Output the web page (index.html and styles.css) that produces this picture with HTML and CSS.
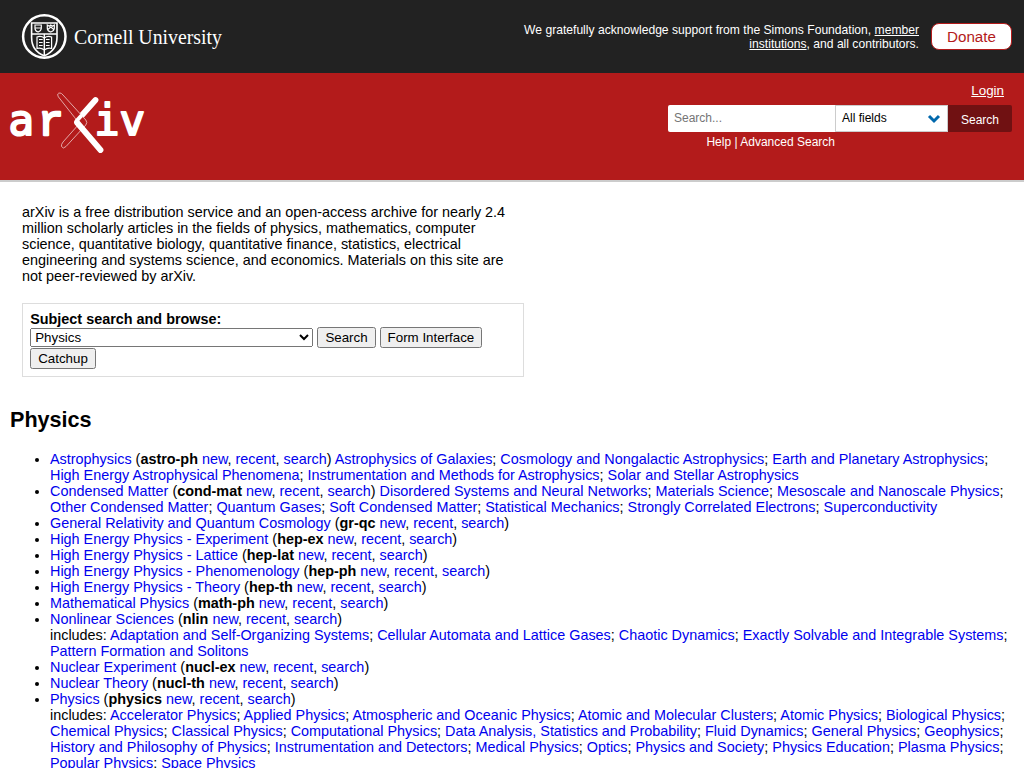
FILE: index.html
```html
<!DOCTYPE html>
<html lang="en">
<head>
<meta charset="utf-8">
<title>arXiv.org e-Print archive</title>
<link rel="stylesheet" href="styles.css">
</head>
<body>
<header>
<div class="topbar">
<svg class="cornell" width="210" height="50" viewBox="0 0 210 50" role="img" aria-label="Cornell University">
<g fill="none" stroke="#fff">
<circle cx="24.300" cy="25.500" r="21.200" stroke-width="2.500"/>
<path d="M11.600 12H37V26.500C37 36 31 42 24.300 44.800C17 42 11.600 36 11.600 26.500Z" stroke-width="1.600"/>
<path d="M11.800 23H36.800M24.300 23V44.500" stroke-width="1.400"/>
<path d="M15 14H21.300V17.500Q21 20 18.100 21Q15 20 15 17.500ZM15 17H21.300M27.300 14L29.300 15.200L30.800 14L32.300 15.200L34.300 14V17.500Q34 20 30.800 21Q27.300 20 27.300 17.500ZM27.800 18.500L30.800 16L33.800 18.500" stroke-width="1.200"/>
<path d="M17 26Q21 24.500 24.300 27Q27.500 24.500 31.600 26V37.500Q27.500 36.500 24.300 39Q21 36.500 17 37.500Z" stroke-width="1.200"/>
<path d="M19 28.500H22.700M19 31.500H22.700M19 34.500H22.700M25.900 28.500H29.600M25.900 31.500H29.600M25.900 34.500H29.600" stroke-width="1.100"/>
</g>
<text class="cornell-name" x="54" y="33" textLength="148" lengthAdjust="spacingAndGlyphs">Cornell University</text>
</svg>
<div class="support">
<p>We gratefully acknowledge support from the Simons Foundation, <a href="#">member institutions</a>, and all contributors.</p>
<a class="donate" href="#">Donate</a>
</div>
</div>
<div class="brandbar">
<svg class="arxiv" width="138" height="64" viewBox="0 0 138 64" role="img" aria-label="arXiv">
<text class="mono" x="-1.500" y="43.500">a</text>
<text class="slab" x="28" y="43.500">r</text>
<text class="mono" x="84.500" y="43.500" textLength="25" lengthAdjust="spacingAndGlyphs">i</text>
<text class="mono" x="109.500" y="43.500">v</text>
<g stroke-linecap="round" fill="none">
<path d="M69 27.500L85.500 9" stroke="#fff" stroke-width="5.800"/>
<path d="M48.200 5.500Q46.500 2 50 2Q51.500 2 53 4L75.800 29Q77.800 31.500 75.800 34L56 55.500Q53 58.500 51.500 55.500Q51 53.500 53 51L69 33L65 27Z" fill="#b31b1b" stroke="#e8b8b8" stroke-width=".9"/>
<path d="M66.500 30L71 25" stroke="#fff" stroke-width="4"/>
<path d="M67 31.500L90.500 59" stroke="#fff" stroke-width="5.800"/>
</g>
</svg>
<div class="searcharea">
<a class="login" href="#">Login</a>
<form class="searchform">
<input type="text" placeholder="Search..." aria-label="Search term">
<div class="field">All fields<svg width="14" height="10" viewBox="0 0 14 10"><path d="M2 2L7 7L12 2" fill="none" stroke="#0068ac" stroke-width="3"/></svg></div>
<button type="button">Search</button>
</form>
<p class="help"><a href="#">Help</a> | <a href="#">Advanced Search</a></p>
</div>
</div>
</header>
<main>
<section class="intro">
<p>arXiv is a free distribution service and an open-access archive for nearly 2.4 million scholarly articles in the fields of physics, mathematics, computer science, quantitative biology, quantitative finance, statistics, electrical engineering and systems science, and economics. Materials on this site are not peer-reviewed by arXiv.</p>
<form class="browse"><label for="subject">Subject search and browse:</label><br>
<select id="subject"><option>Physics</option></select>
<button type="button">Search</button>
<button type="button">Form Interface</button>
<button type="button">Catchup</button></form>
</section>
<h2>Physics</h2>
<ul>
<li><a href="#">Astrophysics</a> (<b>astro-ph</b> <a href="#">new</a>, <a href="#">recent</a>, <a href="#">search</a>) <a href="#">Astrophysics of Galaxies</a>; <a href="#">Cosmology and Nongalactic Astrophysics</a>; <a href="#">Earth and Planetary Astrophysics</a>; <a href="#">High Energy Astrophysical Phenomena</a>; <a href="#">Instrumentation and Methods for Astrophysics</a>; <a href="#">Solar and Stellar Astrophysics</a></li>
<li><a href="#">Condensed Matter</a> (<b>cond-mat</b> <a href="#">new</a>, <a href="#">recent</a>, <a href="#">search</a>) <a href="#">Disordered Systems and Neural Networks</a>; <a href="#">Materials Science</a>; <a href="#">Mesoscale and Nanoscale Physics</a>; <a href="#">Other Condensed Matter</a>; <a href="#">Quantum Gases</a>; <a href="#">Soft Condensed Matter</a>; <a href="#">Statistical Mechanics</a>; <a href="#">Strongly Correlated Electrons</a>; <a href="#">Superconductivity</a></li>
<li><a href="#">General Relativity and Quantum Cosmology</a> (<b>gr-qc</b> <a href="#">new</a>, <a href="#">recent</a>, <a href="#">search</a>)</li>
<li><a href="#">High Energy Physics - Experiment</a> (<b>hep-ex</b> <a href="#">new</a>, <a href="#">recent</a>, <a href="#">search</a>)</li>
<li><a href="#">High Energy Physics - Lattice</a> (<b>hep-lat</b> <a href="#">new</a>, <a href="#">recent</a>, <a href="#">search</a>)</li>
<li><a href="#">High Energy Physics - Phenomenology</a> (<b>hep-ph</b> <a href="#">new</a>, <a href="#">recent</a>, <a href="#">search</a>)</li>
<li><a href="#">High Energy Physics - Theory</a> (<b>hep-th</b> <a href="#">new</a>, <a href="#">recent</a>, <a href="#">search</a>)</li>
<li><a href="#">Mathematical Physics</a> (<b>math-ph</b> <a href="#">new</a>, <a href="#">recent</a>, <a href="#">search</a>)</li>
<li><a href="#">Nonlinear Sciences</a> (<b>nlin</b> <a href="#">new</a>, <a href="#">recent</a>, <a href="#">search</a>)<br>includes: <a href="#">Adaptation and Self-Organizing Systems</a>; <a href="#">Cellular Automata and Lattice Gases</a>; <a href="#">Chaotic Dynamics</a>; <a href="#">Exactly Solvable and Integrable Systems</a>; <a href="#">Pattern Formation and Solitons</a></li>
<li><a href="#">Nuclear Experiment</a> (<b>nucl-ex</b> <a href="#">new</a>, <a href="#">recent</a>, <a href="#">search</a>)</li>
<li><a href="#">Nuclear Theory</a> (<b>nucl-th</b> <a href="#">new</a>, <a href="#">recent</a>, <a href="#">search</a>)</li>
<li><a href="#">Physics</a> (<b>physics</b> <a href="#">new</a>, <a href="#">recent</a>, <a href="#">search</a>)<br>includes: <a href="#">Accelerator Physics</a>; <a href="#">Applied Physics</a>; <a href="#">Atmospheric and Oceanic Physics</a>; <a href="#">Atomic and Molecular Clusters</a>; <a href="#">Atomic Physics</a>; <a href="#">Biological Physics</a>; <a href="#">Chemical Physics</a>; <a href="#">Classical Physics</a>; <a href="#">Computational Physics</a>; <a href="#">Data Analysis, Statistics and Probability</a>; <a href="#">Fluid Dynamics</a>; <a href="#">General Physics</a>; <a href="#">Geophysics</a>; <a href="#">History and Philosophy of Physics</a>; <a href="#">Instrumentation and Detectors</a>; <a href="#">Medical Physics</a>; <a href="#">Optics</a>; <a href="#">Physics and Society</a>; <a href="#">Physics Education</a>; <a href="#">Plasma Physics</a>; <a href="#">Popular Physics</a>; <a href="#">Space Physics</a></li>
</ul>
</main>
</body>
</html>
```
FILE: styles.css
```css
* { box-sizing: border-box; }
body {
  margin: 0;
  height: 768px;
  overflow: hidden;
  background: #fff;
  color: #000;
  font: 14.4px/16px "Liberation Sans", Arial, sans-serif;
}
a { color: #0000ee; text-decoration: none; }
p { margin: 0; }

.topbar {
  display: flex;
  justify-content: space-between;
  height: 73px;
  padding: 12px 12px 0 20px;
  background: #222;
}
.cornell { margin-top: -1px; overflow: visible; }
.cornell-name { fill: #fff; font: 21.5px "Liberation Serif", serif; }
.support { display: flex; align-items: flex-start; gap: 12px; padding-top: 11px; }
.support p {
  width: 410px;
  color: #fff;
  font-size: 12.12px;
  line-height: 14px;
  text-align: right;
}
.support p a { color: #fff; text-decoration: underline; }
.donate {
  width: 81px;
  height: 27px;
  border: 1px solid #b31b1b;
  border-radius: 8px;
  background: #fff;
  color: #b31b1b;
  font-size: 15.2px;
  line-height: 25px;
  text-align: center;
}

.brandbar {
  display: flex;
  justify-content: space-between;
  height: 109px;
  padding: 10px 12px 0 10px;
  border-bottom: 2px solid #ccc;
  background: #b31b1b;
}
.arxiv { margin-top: 8px; overflow: visible; }
.mono, .slab { fill: #fff; stroke: #fff; stroke-linejoin: round; }
.mono { font: 42.500px "DejaVu Sans Mono", monospace; stroke-width: 2px; }
.slab { font: 43px "Liberation Mono", monospace; stroke-width: 2.4px; }
.searcharea { width: 344px; }
.login {
  display: block;
  height: 22px;
  padding-right: 8px;
  color: #fff;
  font-size: 13.4px;
  text-align: right;
  text-decoration: underline;
}
.searchform { display: flex; height: 27px; font-size: 12px; }
.searchform input {
  width: 167px;
  padding: 0 6px 1px;
  border: 0;
  border-radius: 2px 0 0 2px;
  font: 12px "Liberation Sans", Arial, sans-serif;
}
.field {
  display: flex;
  justify-content: space-between;
  width: 113px;
  padding: 4px 6px;
  border: 1px solid #ccc;
  background: #fff;
}
.field svg { margin-top: 4px; }
.searchform button {
  width: 64px;
  padding: 2px 0 0;
  border: 0;
  border-radius: 0 2px 2px 0;
  background: #701112;
  color: #fff;
  font: 12px "Liberation Sans", Arial, sans-serif;
}
.help {
  padding: 2px 177px 0 0;
  color: #fff;
  font-size: 12px;
  text-align: right;
}
.help a { color: #fff; }

main { padding: 22px 10px 0; }
.intro { width: 502px; margin-left: 12px; }
.browse {
  height: 74px;
  margin-top: 19px;
  padding: 7px 7px 7px 7.2px;
  border: 1px solid #ddd;
}
.browse label { font-weight: bold; }
.browse select { width: 283.2px; height: 19px; }
h2 { margin: 31px 0 19px; font-size: 21.6px; line-height: 24px; }
ul { margin: 0; padding-left: 40px; }
```
